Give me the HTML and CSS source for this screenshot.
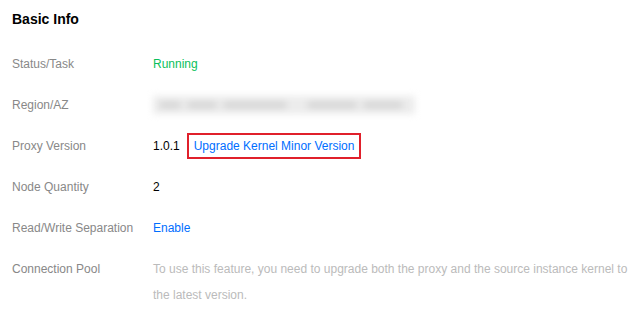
FILE: index.html
```
<!DOCTYPE html>
<html lang="en">
<head>
    <meta charset="UTF-8">
    <title>Basic Info</title>
    <link rel="stylesheet" href="styles.css">
</head>
<body>
    <div class="panel">
        <h2>Basic Info</h2>

        <div class="info-grid">
            <div class="label">Status/Task</div>
            <div class="value running">Running</div>

            <div class="label">Region/AZ</div>
            <div class="value">
                <div class="redacted">
                    <span class="blob w1"></span><span class="blob w2"></span><span class="blob w3"></span><span class="blob w4"></span><span class="blob w5"></span>
                </div>
            </div>

            <div class="label">Proxy Version</div>
            <div class="value version">
                <span>1.0.1</span>
                <a href="#" class="link highlight">Upgrade Kernel Minor Version</a>
            </div>

            <div class="label">Node Quantity</div>
            <div class="value">2</div>

            <div class="label">Read/Write Separation</div>
            <div class="value"><a href="#" class="link">Enable</a></div>

            <div class="label wrap-row">Connection Pool</div>
            <div class="value wrap-row hint">To use this feature, you need to upgrade both the proxy and the source instance kernel to the latest version.</div>
        </div>
    </div>
</body>
</html>
```

FILE: styles.css
```
body {
    margin: 0;
    background: #fff;
    font-family: "Liberation Sans", Arial, sans-serif;
    font-size: 12px;
    color: #000;
}
.panel {
    width: 618px;
    padding: 0 12px;
}
h2 {
    margin: 9px 0 0;
    font-size: 14px;
    line-height: 20px;
    font-weight: bold;
    color: #000;
}
.info-grid {
    display: grid;
    grid-template-columns: 141px 1fr;
    row-gap: 21px;
    margin-top: 25px;
    line-height: 20px;
}
.label {
    color: #888;
}
.value {
    color: #000;
}
.running {
    color: #0abf5b;
}
.link {
    color: #006eff;
    text-decoration: none;
}
.version {
    display: flex;
    align-items: center;
    gap: 7px;
}
.highlight {
    border: 2px solid #e0202b;
    padding: 1px 5px;
    margin: -3px 0 -3px;
}
.redacted {
    display: flex;
    align-items: center;
    gap: 6px;
    width: 262px;
    height: 18px;
    margin-top: 1px;
    background: #ececec;
    filter: blur(3.5px);
    padding: 0 6px;
    box-sizing: border-box;
}
.blob {
    height: 6px;
    background: #d2d2d2;
    border-radius: 3px;
}
.w1 { width: 22px; }
.w2 { width: 30px; }
.w3 { width: 64px; }
.w4 { width: 50px; margin-left: 14px; }
.w5 { width: 40px; }
.wrap-row {
    margin-top: -3px;
    line-height: 26px;
}
.hint {
    color: #bbb;
    padding-right: 2px;
}
```
